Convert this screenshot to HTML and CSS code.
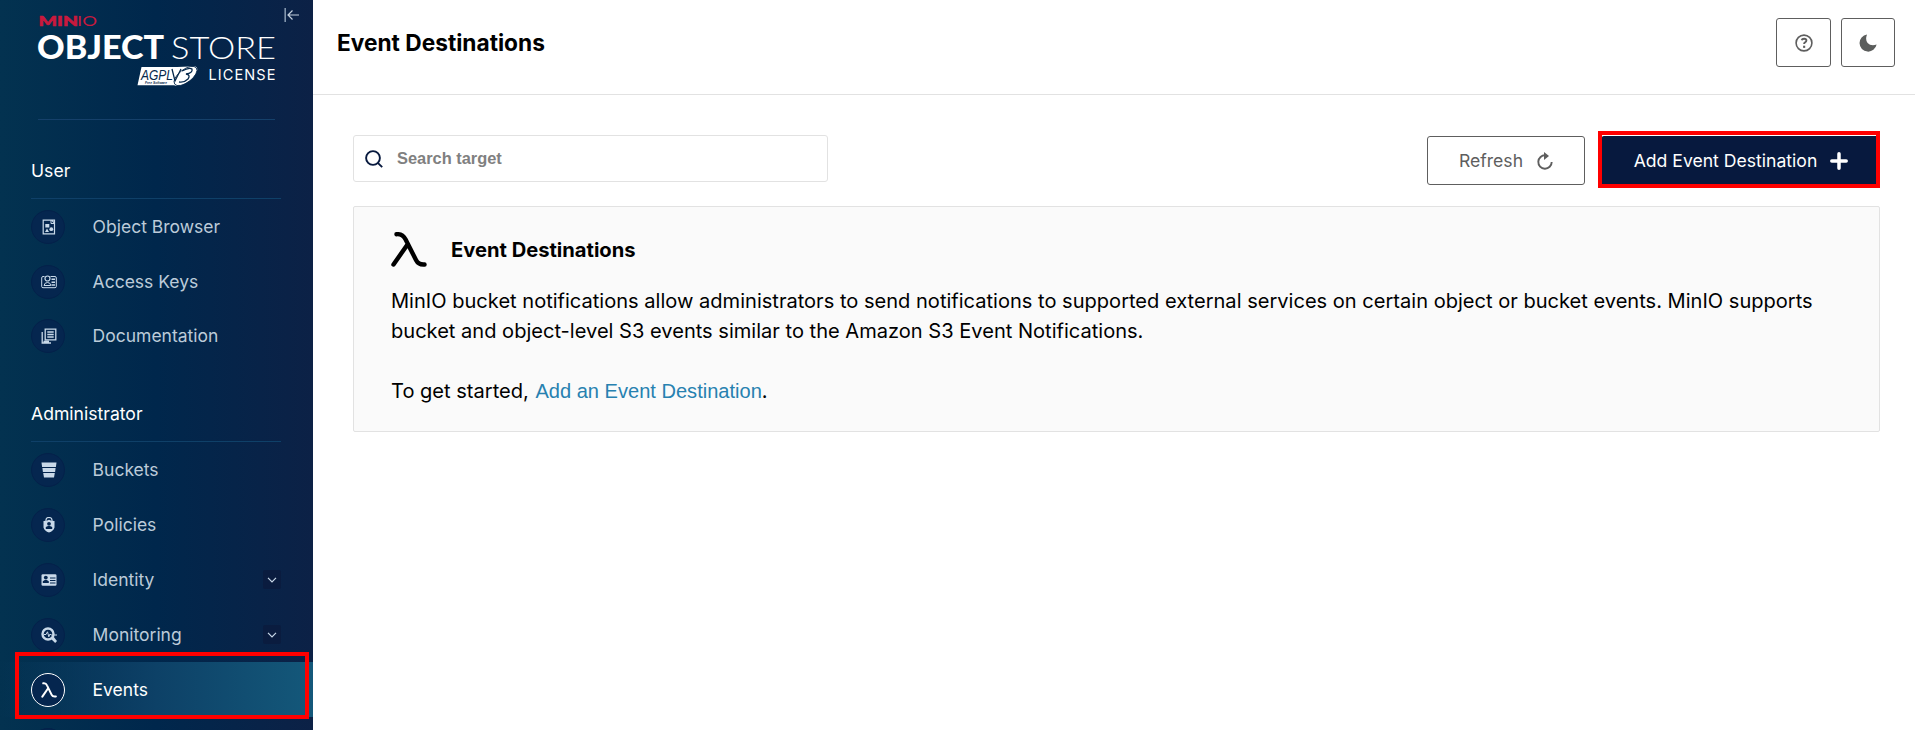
FILE: index.html
```
<!DOCTYPE html>
<html lang="en">
<head>
<meta charset="utf-8">
<title>Event Destinations</title>
<link rel="stylesheet" href="styles.css">
</head>
<body>
<div class="app">
  <aside class="sidebar">
    <div class="brand">
      <svg class="logo" width="240" height="75" viewBox="0 0 240 75">
        <g class="logo-minio" fill="#c9193d">
          <text x="0.500" y="11.800" font-size="13.500" font-weight="900" textLength="39.500" lengthAdjust="spacingAndGlyphs" stroke="#c9193d" stroke-width=".5">MIN</text>
          <text x="39" y="11.800" font-size="13.500" font-weight="400" textLength="20" lengthAdjust="spacingAndGlyphs">IO</text>
        </g>
        <g fill="#fff" class="logo-name">
          <text x="-1" y="44.500" font-size="32" font-weight="900" textLength="127" lengthAdjust="spacingAndGlyphs">OBJECT</text>
          <text x="133" y="44.500" font-size="32" font-weight="300" textLength="105" lengthAdjust="spacingAndGlyphs">STORE</text>
        </g>
        <path d="M103.500 53H139L152 52.500Q161 51 159 57Q157 64 148 69Q142 73 136 71.200H99.500Z" fill="#fff"/>
        <text class="agpl" x="103" y="65.500" font-size="15" textLength="32" lengthAdjust="spacingAndGlyphs" fill="#05284c">AGPL</text>
        <text class="agpl" x="107" y="70" font-size="4" font-weight="700" textLength="22" lengthAdjust="spacingAndGlyphs" fill="#05284c">Free Software</text>
        <path d="M134 55l3 12L143 55M144 57q7-4 10-2q1 4-6 5q5 1 2 5q-4 4-9 3" fill="none" stroke="#05284c" stroke-width="1.300"/>
        <ellipse cx="147.500" cy="62" rx="13.500" ry="6.500" transform="rotate(-37 147.500 62)" fill="none" stroke="#05284c" stroke-width=".8"/>
        <text class="license" x="170.500" y="66" textLength="67" fill="#fff">LICENSE</text>
      </svg>
      <svg class="collapse" width="16" height="16" viewBox="0 0 16 16" fill="none" stroke="#c3d0dd" stroke-width="1.200"><path d="M1.200 1v14" stroke-width="1.600" stroke="#8296ad"/><path d="M15 8H4M8.500 3.500L4 8l4.500 4.500"/></svg>
    </div>
    <nav>
      <h2 class="group">User</h2>
      <a class="item"><span class="disc"><svg width="16" height="16" viewBox="0 0 16 16"><path d="M2.200 1.200h8.300l3 3v10.600H2.200zM10.500 1.200h3v3" fill="none" stroke="#c9d9e9" stroke-width="1.200"/><path d="M10 1v3.500h3.500" fill="none" stroke="#c9d9e9"/><path d="M4.300 5h4v3.500h-4zM4 13l2-3.500L8 13z"/><circle cx="10.300" cy="10.200" r="1.900"/></svg></span>Object Browser</a>
      <a class="item"><span class="disc"><svg width="16" height="16" viewBox="0 0 16 16"><path d="M3.500 2.500H2Q.7 2.500.7 4v8.500Q.7 13.700 2 13.700h12q1.300 0 1.300-1.200V4q0-1.500-1.300-1.500H9.500M3 11.500q.5-3 3.500-3t3.300 3z" fill="none" stroke="#c9d9e9"/><circle cx="6.500" cy="4.500" r="2.500" fill="none" stroke="#c9d9e9" stroke-width="1.200"/><path d="M10.500 4.500h3.500V6h-3.500zM10.500 7.500h3.500V9h-3.500zM10.500 10.300h3.500v1.500h-3.500z"/></svg></span>Access Keys</a>
      <a class="item item-docs"><span class="disc"><svg width="16" height="16" viewBox="0 0 16 16" fill="none" stroke="#c9d9e9" stroke-width="1.300"><path d="M4.200 1.200h10.600v10.600H4.200zM1.200 4v11H10M2.500 13.500H8M6.300 4h6.400M6.300 6.500h6.400M6.300 9h6.400"/></svg></span>Documentation</a>

      <h2 class="group group-admin">Administrator</h2>
      <a class="item"><span class="disc"><svg width="16" height="16" viewBox="0 0 16 16"><path d="M.5.500h15l-.6 4.500H1.100zM1.400 6h13.200l-.5 4H1.900zM2.200 11h11.600l-.8 4.500H3z"/></svg></span>Buckets</a>
      <a class="item"><span class="disc"><svg width="16" height="16" viewBox="0 0 16 16"><path d="M5 4V3q0-2.500 3-2.500T11 3v1" fill="none" stroke="#c9d9e9" stroke-width="1.200"/><path d="M2.500 4Q6 4 8 2.800 10 4 13.500 4v6.500q-1 3.500-5.500 5-4.500-1.500-5.500-5z"/><circle cx="8" cy="6.800" r="1.900" fill="#05264f"/><path d="M4.800 12V10l2.200-1h2l2.200 1v2z" fill="#05264f"/></svg></span>Policies</a>
      <a class="item"><span class="disc"><svg width="16" height="16" viewBox="0 0 16 16"><rect x=".5" y="2.300" width="15" height="11.400" rx="1.300"/><g fill="#05264f"><circle cx="4.800" cy="5.600" r="1.900"/><path d="M1.800 11V9.300L3.800 8h2l2 1.300V11zM9 5.500h5.500v1H9zM9 8h5.500v1H9zM9 10.500h5.500v1H9z"/></g></svg></span>Identity<span class="chevron"><svg width="10" height="6" viewBox="0 0 10 6" fill="none" stroke="#c9d9e9" stroke-width="1.200"><path d="M1 .8l4 4 4-4"/></svg></span></a>
      <a class="item"><span class="disc"><svg width="16" height="16" viewBox="0 0 16 16"><circle cx="7" cy="7" r="5.500" fill="none" stroke="#c9d9e9" stroke-width="2.400"/><path d="M9.500 11.500l2.500-2.500 4 5-1.800 2z"/><path d="M3 7.500h2L6.500 4.800l1.300 5L9 7l1 1h6" fill="none" stroke="#c9d9e9"/></svg></span>Monitoring<span class="chevron"><svg width="10" height="6" viewBox="0 0 10 6" fill="none" stroke="#c9d9e9" stroke-width="1.200"><path d="M1 .8l4 4 4-4"/></svg></span></a>
      <a class="item active"><span class="disc"><svg width="16" height="16" viewBox="0 0 36 36" fill="none" stroke="#fff" stroke-width="4.500" stroke-linecap="round"><path d="M5 3q6-1 8.500 4.500L24 29q2 4.500 9.500 3.500M16 14L3 33"/></svg></span>Events</a>
      <a class="item"><span class="disc"></span></a>
    </nav>
    <div class="mark mark-events"></div>
  </aside>

  <main class="main">
    <header class="topbar">
      <h1>Event Destinations</h1>
      <div class="tools">
        <button class="btn tool tool-help"><svg width="18" height="18" viewBox="0 0 18 18" fill="none" stroke="#5e5e5e"><circle cx="9" cy="9" r="7.900" stroke-width="1.600"/><path d="M6.700 6.300q.3-1.500 2.400-1.500 2.300 0 2.300 1.800 0 1.200-1.300 1.700-1 .5-1 1.700" stroke-width="1.900"/><path d="M8.100 12.800h2.100" stroke-width="2.200"/></svg></button>
        <button class="btn tool"><svg width="18" height="18" viewBox="0 0 18 18"><path d="M8 .5Q6 6 8.600 9q3.200 3.300 9 1.600A8.600 8.600 0 1 1 8 .5z" fill="#5b5d5c"/></svg></button>
      </div>
    </header>
    <section class="content">
      <div class="actions">
        <label class="search"><svg width="18" height="18" viewBox="0 0 18 18" fill="none" stroke="#07193e" stroke-width="1.900"><circle cx="8" cy="8" r="6.900"/><path d="M12.800 12.800l4.400 4.400"/></svg><input type="text" placeholder="Search target"></label>
        <div class="buttons">
          <button class="btn refresh">Refresh<svg width="18" height="18" viewBox="0 0 18 18"><path d="M9.500 3.300A6.700 6.700 0 1 0 15.700 10" fill="none" stroke="#5e5e5e" stroke-width="1.900"/><path d="M8 0l5 4-5 4z" fill="#5e5e5e"/></svg></button>
          <button class="btn primary">Add Event Destination<svg width="18" height="18" viewBox="0 0 18 18" stroke="#fff" stroke-width="3.500" stroke-linecap="round"><path d="M9 1.800v14.400M1.800 9h14.400"/></svg></button>
          <div class="mark mark-add"></div>
        </div>
      </div>
      <article class="help">
        <h3><svg width="36" height="36" viewBox="0 0 36 36" fill="none" stroke="#000" stroke-width="4.400" stroke-linecap="round"><path d="M5.500 2.200q6-.5 9 5L25 28q2.500 5 8.500 4.500M16.500 12.500L2.500 32.500"/></svg>Event Destinations</h3>
        <p class="line-a">MinIO bucket notifications allow administrators to send notifications to supported external services on certain object or bucket events. MinIO supports<br>bucket and object-level S3 events similar to the Amazon S3 Event Notifications.</p>
        <p>To get started, <a class="link">Add an Event Destination</a>.</p>
      </article>
    </section>
  </main>
</div>
</body>
</html>
```
FILE: styles.css
```
* { box-sizing: border-box; }
body { margin: 0; font-family: Inter, "Liberation Sans", sans-serif; color: #000; background: #fff; }
h1, h2, h3, p { margin: 0; }
.app { display: flex; width: 1915px; height: 730px; overflow: hidden; }

.sidebar { position: relative; flex: none; width: 313px; height: 730px; overflow: hidden; background: linear-gradient(90deg, #033250 0%, #00274c 50%, #0c2146 100%); }
.brand { position: relative; height: 120px; margin: 0 38px; border-bottom: 1px solid #15406a; padding-top: 14px; }
.logo { display: block; overflow: visible; }
.logo-minio, .logo-name { font-family: Lato, sans-serif; }
.agpl { font-family: "Liberation Sans", sans-serif; font-style: italic; }
.license { font-family: Inter, sans-serif; font-size: 14.500px; }
.collapse { position: absolute; left: 246px; top: 7px; }
.group { height: 79px; margin: 0 32px 0 31px; padding-top: 40px; border-bottom: 1px solid #0f4068; font-size: 17.600px; line-height: 22px; font-weight: 400; color: #fff; }
.group-admin { height: 78px; padding-top: 39px; }
.item { display: flex; align-items: center; height: 55px; padding: 0 32px 0 31px; color: #bccbd9; font-size: 17.500px; }
.item-docs { padding-bottom: 2px; }
.disc { flex: none; display: grid; place-items: center; width: 34px; height: 34px; margin-right: 27.600px; padding-left: 1px; border: 1px solid #04214a; border-radius: 50%; background: #05264f; fill: #c9d9e9; }
.chevron { display: grid; place-items: center; width: 18px; height: 19px; margin-left: auto; border-radius: 2px; background: #0a1c3f; }
.active { color: #fff; background: linear-gradient(90deg, transparent 0%, #0d4167 50%, #14587a 100%); }
.active .disc { border-color: #fff; }
.mark { position: absolute; border: 4px solid #f00; pointer-events: none; }
.mark-events { left: 15px; top: 652px; width: 294px; height: 67px; }

.main { flex: 1; min-width: 0; }
.topbar { display: flex; justify-content: space-between; height: 95px; padding: 18px 20px 0 24px; border-bottom: 1px solid #e2e2e2; }
h1 { font-size: 22.700px; line-height: 50px; font-weight: 700; }
.tools { display: flex; gap: 10px; }
.btn { display: flex; align-items: center; justify-content: center; height: 49px; padding: 0; border: 1px solid #5e5e5e; border-radius: 3px; background: #fff; font: 400 17.600px Inter, sans-serif; color: #5e5e5e; }
.tool { width: 54px; }
.tool-help { width: 55px; }
.content { padding: 40px 35px 0 40px; }
.actions { display: flex; justify-content: space-between; height: 71px; }
.search { display: flex; align-items: center; width: 475px; height: 47px; padding: 0 11px; gap: 14px; border: 1px solid #e2e2e2; border-radius: 3px; }
.search input { flex: 1; border: 0; padding: 0; outline: 0; background: none; font: 700 16.400px "Liberation Sans", sans-serif; }
.search input::placeholder { color: #808080; opacity: 1; }
.buttons { position: relative; display: flex; gap: 16px; padding-top: 1px; }
.refresh { width: 158px; gap: 13px; padding-left: 1px; }
.primary { width: 279px; gap: 13px; padding-left: 1px; border-color: #07193e; background: #07193e; color: #fff; }
.mark-add { right: 0; top: -4px; width: 282px; height: 57px; }
.help { height: 226px; padding: 25px 37px; border: 1px solid #e2e2e2; border-radius: 2px; background: #fafafa; font-size: 20.070px; line-height: 30px; }
.help h3 { display: flex; align-items: center; gap: 24px; height: 36px; margin-bottom: 18px; font-size: 20.150px; }
.help p { white-space: nowrap; }
.line-a { margin-bottom: 30px; }
.link { margin-left: 1px; color: #2781b0; font-family: "Liberation Sans", sans-serif; }
```
